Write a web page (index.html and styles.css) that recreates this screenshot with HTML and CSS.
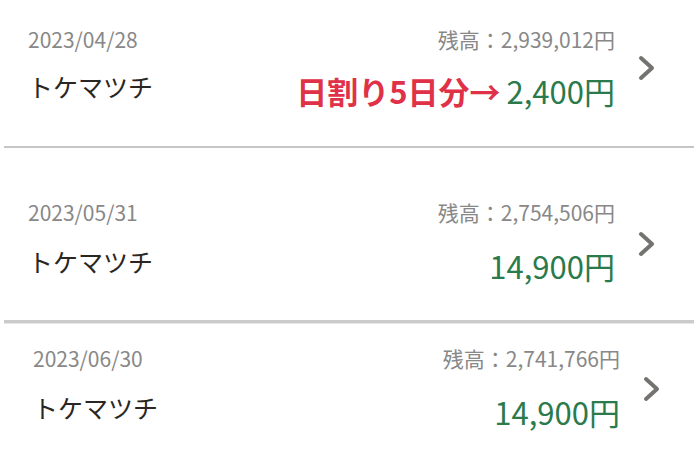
FILE: index.html
```html
<!DOCTYPE html>
<html lang="ja">

<head>
  <meta charset="UTF-8">
  <title>明細</title>
  <link rel="stylesheet" href="styles.css">
</head>

<body>
  <div class="entry entry_first">
    <div class="entry-body">
      <div class="entry-row">
        <span class="date">2023/04/28</span>
        <span class="balance">残高：2,939,012円</span>
      </div>
      <div class="entry-row entry-row_main">
        <span class="payee">トケマツチ</span>
        <span class="amount"><span class="note">日割り5日分→</span>2,400円</span>
      </div>
    </div>
    <svg class="chevron" width="18" height="26" viewBox="0 0 18 26">
      <polyline points="3,3 14,13 3,23" />
    </svg>
  </div>
  <div class="rule"></div>

  <div class="entry entry_second">
    <div class="entry-body">
      <div class="entry-row">
        <span class="date">2023/05/31</span>
        <span class="balance">残高：2,754,506円</span>
      </div>
      <div class="entry-row entry-row_main">
        <span class="payee">トケマツチ</span>
        <span class="amount">14,900円</span>
      </div>
    </div>
    <svg class="chevron" width="18" height="26" viewBox="0 0 18 26">
      <polyline points="3,3 14,13 3,23" />
    </svg>
  </div>
  <div class="rule rule_thick"></div>

  <div class="entry entry_third">
    <div class="entry-body">
      <div class="entry-row">
        <span class="date">2023/06/30</span>
        <span class="balance">残高：2,741,766円</span>
      </div>
      <div class="entry-row entry-row_main">
        <span class="payee">トケマツチ</span>
        <span class="amount">14,900円</span>
      </div>
    </div>
    <svg class="chevron" width="18" height="26" viewBox="0 0 18 26">
      <polyline points="3,3 14,13 3,23" />
    </svg>
  </div>
</body>

</html>
```

FILE: styles.css
```css
body {
  margin: 0;
  background: #fff;
  font-family: "Noto Sans CJK JP", "Noto Sans", sans-serif;
  color: #2a2622;
  overflow: hidden;
}

.entry {
  box-sizing: border-box;
  display: flex;
  align-items: flex-start;
  padding-left: 28px;
}

.entry_first {
  height: 146px;
  padding-top: 24px;
}

.entry_second {
  height: 172px;
  padding-top: 49px;
}

.entry_third {
  height: 126px;
  padding-left: 33px;
  padding-top: 19px;
}

.entry-body {
  width: 587px;
  display: flex;
  flex-direction: column;
  gap: 14px;
}

.entry_second .entry-body,
.entry_third .entry-body {
  gap: 16px;
}

.entry-row {
  display: flex;
  justify-content: space-between;
  align-items: baseline;
}

.entry-row_main {
  align-items: flex-start;
}

.date,
.balance {
  font-size: 21px;
  color: #888;
}

.payee {
  font-size: 25px;
}

.amount {
  font-size: 31px;
  color: #2b7a4b;
}

.note {
  color: #df3148;
  font-weight: bold;
  margin-right: 6px;
}

.chevron {
  margin-left: 23px;
  margin-top: 31px;
}

.entry_second .chevron {
  margin-top: 34px;
}

.entry_third .chevron {
  margin-top: 33px;
}

.chevron polyline {
  fill: none;
  stroke: #757370;
  stroke-width: 4;
  stroke-linecap: round;
  stroke-linejoin: round;
}

.rule {
  margin: 0 6px 0 4px;
  height: 2px;
  background: #c6c6c6;
}

.rule_thick {
  height: 3px;
  background: #cbcbcb;
  border-bottom: 1px solid #e6e6e6;
}
```
